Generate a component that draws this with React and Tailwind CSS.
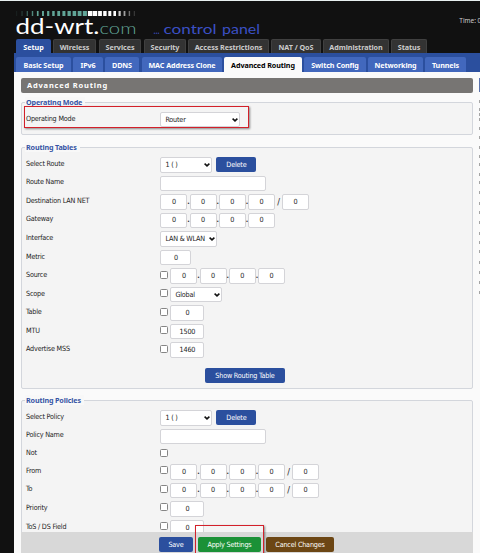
import React from "react";

const mainTabs = [
  ["Setup", "w-[35px] mr-[2px]"],
  ["Wireless", "w-[43px] mr-[3px]"],
  ["Services", "w-[42px] mr-[3px]"],
  ["Security", "w-[42px] mr-[2px]"],
  ["Access Restrictions", "w-[81px] mr-[2px]"],
  ["NAT / QoS", "w-[50px] mr-[2px]"],
  ["Administration", "w-[66px] mr-[2px]"],
  ["Status", "w-[36px]"],
];

const subTabs = [
  ["Basic Setup", "w-[55px] mr-[2px]"],
  ["IPv6", "w-[30px] mr-[2px]"],
  ["DDNS", "w-[34px] mr-[3px]"],
  ["MAC Address Clone", "w-[80px] mr-[2px]"],
  ["Advanced Routing", "w-[78px] mr-[2px]"],
  ["Switch Config", "w-[62px] mr-[2px]"],
  ["Networking", "w-[55px] mr-[2px]"],
  ["Tunnels", "w-[41px]"],
];

const box = "h-[15.5px] shrink-0 rounded-[2px] border border-[#d4d4d8] bg-white";

function Input({ w = "w-[27px]", children }) {
  return <div className={`${box} ${w} flex items-center justify-center`}>{children}</div>;
}

function Select({ w, children }) {
  return (
    <div className={`${box} ${w} flex items-center justify-between pl-[4px] pr-[1px]`}>
      <span className="pt-px">{children}</span>
      <svg className="shrink-0" width="6" height="4" viewBox="0 0 6 4">
        <path d="M0.6 0.6 L3 2.9 L5.4 0.6" fill="none" stroke="#111" strokeWidth="1.5" />
      </svg>
    </div>
  );
}

function Check() {
  return <div className="mb-[3px] mr-[2px] h-[8px] w-[8px] shrink-0 rounded-[1.5px] border border-[#858585] bg-white" />;
}

function Button({ className = "bg-[#2b4f9e]", children }) {
  return (
    <div className={`flex h-[15px] shrink-0 items-center justify-center rounded-[2px] text-white ${className}`}>{children}</div>
  );
}

function Ip({ mask }) {
  return (
    <>
      {[0, 1, 2, 3].map((i) => (
        <React.Fragment key={i}>
          <Input>0</Input>
          {i < 3 && (
            <span className="flex w-[2.2px] shrink-0 justify-center font-bold text-[#333]">.</span>
          )}
        </React.Fragment>
      ))}
      {mask && (
        <>
          <span className="w-[7px] shrink-0 text-center text-[9px]">/</span>
          <Input>0</Input>
        </>
      )}
    </>
  );
}

function Row({ label, h = "h-[18.55px]", children }) {
  return (
    <div className={`flex items-center ${h}`}>
      <div className="w-[134.4px] shrink-0 pb-[2px]">{label}</div>
      <div className="flex items-center">{children}</div>
    </div>
  );
}

function Group({ title, className, children }) {
  return (
    <section className={`w-[452px] rounded-[2px] border border-[#d3d6dc] bg-[#f4f4f4] pl-[4px] ${className}`}>
      <h2 className="-mt-[6px] mb-px ml-[-1px] h-[10px] w-fit bg-[#f8f8f8] pl-[1px] pr-[3px] font-['Noto_Sans',sans-serif] text-[7.2px] font-bold leading-[10px] tracking-[-0.15px] text-[#3654a4]">
        {title}
      </h2>
      {children}
    </section>
  );
}

function Logo() {
  return (
    <svg className="block font-['Noto_Sans',sans-serif]" width="480" height="38" viewBox="0 0 480 38">
      {Array.from({ length: 24 }, (_, i) => {
        const w = i < 14 ? 0.6 + i * 0.27 : 4.6 - (i - 14) * 0.4;
        const edge = Math.min(1, (Math.min(i, 23 - i) + 1) / 5);
        return (
          <rect key={i} x={16.5 + i * 5.1} y="10" width={w} height="5" opacity={edge} fill={i < 14 ? "#61a597" : "#fff"} />
        );
      })}
      <g fontFamily="Lato, sans-serif">
        <text x="15.5" y="32.5" fontSize="21.5" fill="#fff" textLength="84" lengthAdjust="spacingAndGlyphs">dd-wrt.</text>
        <text x="99.5" y="32.5" fontSize="16" fontWeight="300" fill="#61a597" textLength="37" lengthAdjust="spacingAndGlyphs">com</text>
        <text x="153.5" y="32.5" fontSize="12" fill="#3b50c4" textLength="6" lengthAdjust="spacingAndGlyphs">...</text>
        <text x="163.5" y="32.5" fontSize="13" fill="#3b50c4" textLength="53" lengthAdjust="spacingAndGlyphs">control</text>
        <text x="222" y="32.5" fontSize="13" fill="#3b50c4" textLength="38" lengthAdjust="spacingAndGlyphs">panel</text>
      </g>
      <text x="459.3" y="21.5" fontSize="7" fill="#ccc" textLength="22" lengthAdjust="spacingAndGlyphs">Time: 0</text>
    </svg>
  );
}

// Gaps between the marks along the help column's visible edge.
const helpMarks = [8, 5, 2, 2, 6, 6, 7, 6, 5, 7, 5, 7, 8, 6, 7, 8, 6, 6, 8, 7, 7, 7];

export default function App() {
  return (
    <div className="relative flex h-[553px] w-[480px] flex-col overflow-hidden whitespace-nowrap border-t border-[#e8f0f0] bg-[#111] font-['DejaVu_Sans_Condensed','DejaVu_Sans',sans-serif] text-[7.2px] leading-[10px] tracking-[-0.2px] text-[#1c1c1c] [font-stretch:condensed]">
      <header className="h-[38px] shrink-0 tracking-normal">
        <Logo />
      </header>
      <nav className="flex h-[14px] shrink-0 pl-[16px] font-['Noto_Sans',sans-serif] text-[7.2px] font-bold tracking-[-0.05px]">
        {mainTabs.map(([name, w], i) => (
          <div
            key={name}
            className={`flex shrink-0 items-center justify-center rounded-t-[2px] pt-px ${w} ${i === 0 ? "bg-[#2b4f9e] text-white" : "border border-b-0 border-[#404040] bg-[#333] text-[#ccc]"}`}
          >
            {name}
          </div>
        ))}
      </nav>
      <nav className="ml-[14px] flex h-[19px] shrink-0 bg-[#2b4f9e] pl-[2px] pt-[4px] font-['Noto_Sans',sans-serif] text-[7.2px] font-bold tracking-[-0.1px]">
        {subTabs.map(([name, w], i) => (
          <div
            key={name}
            className={`flex shrink-0 items-center justify-center rounded-t-[2px] ${w} ${i === 4 ? "bg-[#fafafa] text-black" : "bg-[#4268bd] text-white"}`}
          >
            {name}
          </div>
        ))}
      </nav>
      <main className="ml-[14px] flex min-h-0 flex-1 bg-[#fafafa] pl-[7px] pt-[6px]">
        <div className="w-[452px] shrink-0">
          <h1 className="h-[15px] rounded-[2px] bg-[#777573] pl-[6px] font-['Noto_Sans',sans-serif] text-[7.5px] font-bold leading-[15px] tracking-[0.8px] text-white">
            Advanced Routing
          </h1>
          <Group title="Operating Mode" className="mt-[9px] h-[33px]">
            <Row label="Operating Mode" h="h-[23px]">
              <Select w="w-[80px]">Router</Select>
            </Row>
          </Group>
          <Group title="Routing Tables" className="mt-[12px] h-[242px]">
            <div className="h-[2.5px]" />
            <Row label="Select Route">
              <Select w="w-[52px]">1 ( )</Select>
              <Button className="ml-[4px] w-[40px] bg-[#2b4f9e]">Delete</Button>
            </Row>
            <Row label="Route Name"><Input w="w-[106px]" /></Row>
            <Row label="Destination LAN NET"><Ip mask /></Row>
            <Row label="Gateway"><Ip /></Row>
            <Row label="Interface"><Select w="w-[57px]">LAN &amp; WLAN</Select></Row>
            <Row label="Metric"><Input w="w-[31px]">0</Input></Row>
            <Row label="Source"><Check /><Ip /></Row>
            <Row label="Scope"><Check /><Select w="w-[52px]">Global</Select></Row>
            <Row label="Table"><Check /><Input w="w-[34px]">0</Input></Row>
            <Row label="MTU"><Check /><Input w="w-[34px]">1500</Input></Row>
            <Row label="Advertise MSS"><Check /><Input w="w-[34px]">1460</Input></Row>
            <div className="flex pl-[179px] pt-[8.5px]">
              <Button className="w-[80px] bg-[#2b4f9e]">Show Routing Table</Button>
            </div>
          </Group>
          <Group title="Routing Policies" className="mt-[11px] h-[170px]">
            <div className="h-[2.5px]" />
            <Row label="Select Policy">
              <Select w="w-[52px]">1 ( )</Select>
              <Button className="ml-[4px] w-[40px] bg-[#2b4f9e]">Delete</Button>
            </Row>
            <Row label="Policy Name"><Input w="w-[106px]" /></Row>
            <Row label="Not" h="h-[17px]"><Check /></Row>
            <Row label="From"><Check /><Ip mask /></Row>
            <Row label="To"><Check /><Ip mask /></Row>
            <Row label="Priority"><Check /><Input w="w-[34px]">0</Input></Row>
            <Row label="ToS / DS Field"><Check /><Input w="w-[34px]">0</Input></Row>
          </Group>
        </div>
        <aside className="ml-[6px] w-px shrink-0 overflow-hidden">
          <div className="h-[14px] bg-[#5a72ab]" />
          {helpMarks.map((gap, i) => (
            <div key={i} className="h-[3px] bg-[#a5a5a5]" style={{ marginTop: gap }} />
          ))}
        </aside>
      </main>
      <footer className="absolute bottom-0 left-[21px] flex h-[21px] w-[452px] bg-[#d8d8d8] pl-[138px] pt-[5px]">
        <Button className="w-[34px] bg-[#2b4f9e]">Save</Button>
        <Button className="ml-[5px] w-[63px] bg-[#1b9137]">Apply Settings</Button>
        <Button className="ml-[5px] w-[68px] bg-[#6c4614]">Cancel Changes</Button>
      </footer>
      <div className="absolute left-[24px] top-[105px] h-[22px] w-[225px] border border-[#d3202a] shadow-[1px_1px_2px_rgba(0,0,0,0.45)]" />
      <div className="absolute left-[195px] top-[524px] h-[34px] w-[69px] border border-[#d3202a] shadow-[1px_1px_2px_rgba(0,0,0,0.45)]" />
    </div>
  );
}
